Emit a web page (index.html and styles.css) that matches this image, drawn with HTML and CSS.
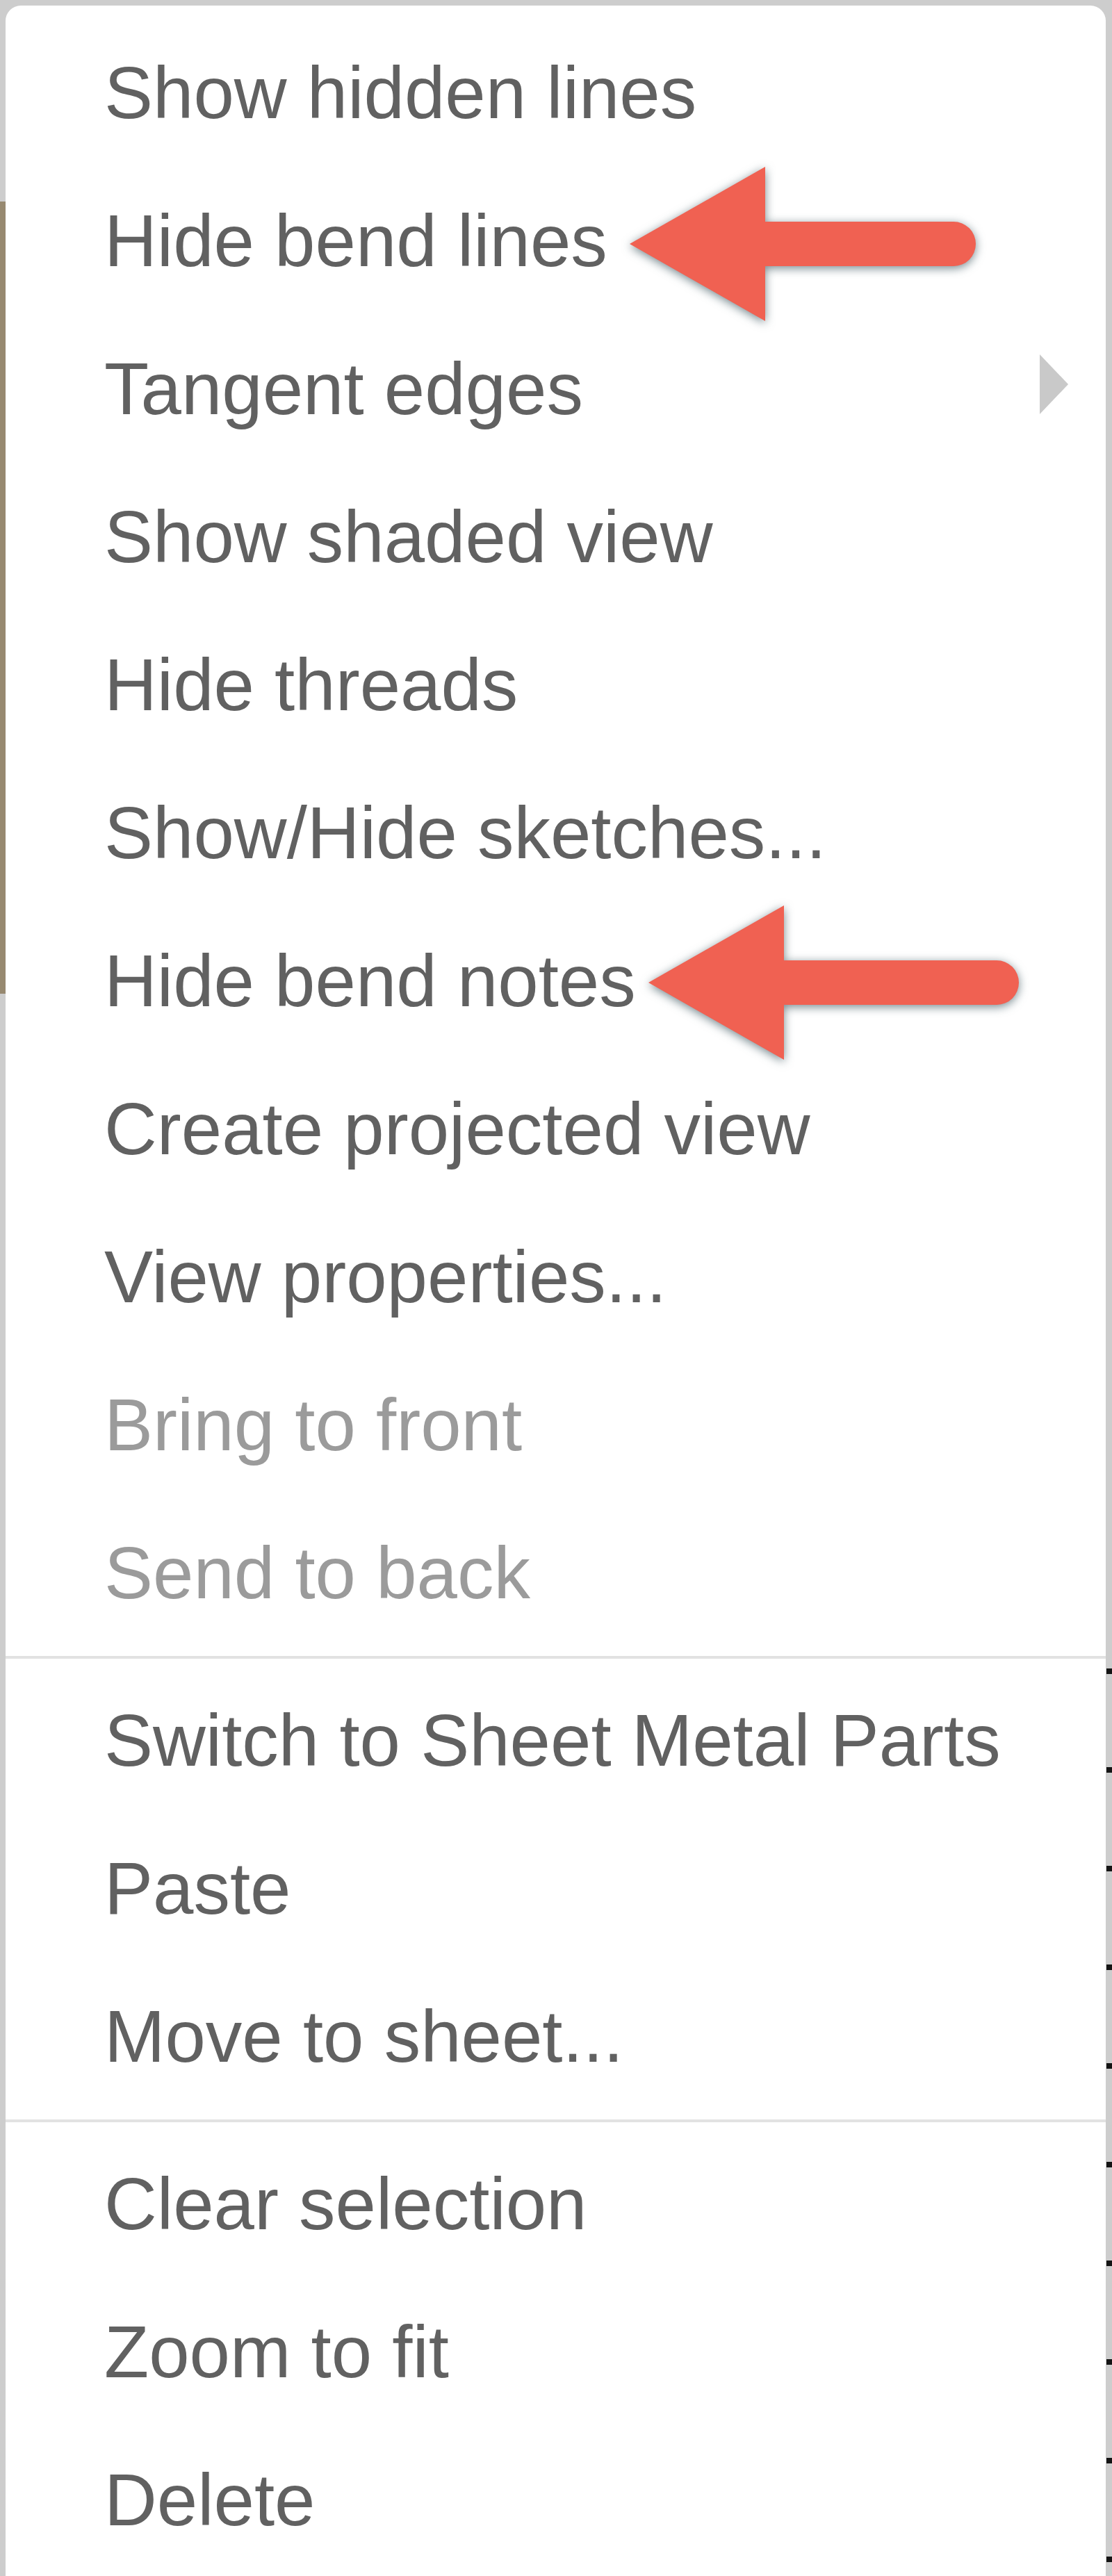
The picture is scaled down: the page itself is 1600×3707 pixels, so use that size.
FILE: index.html
```html
<!DOCTYPE html>
<html lang="en">
<head>
	<meta charset="UTF-8">
	<title>Drawing view context menu</title>
	<link rel="stylesheet" href="styles.css">
</head>
<body>
	<div id="menu">
		<ul>
			<li>Show hidden lines</li>
			<li>Hide bend lines
				<svg class="callout" width="560" height="282" viewBox="0 0 560 282">
					<path d="M20 131 L215 20 L215 99 L486 99 A32 32 0 0 1 486 163 L215 163 L215 242 Z"/>
				</svg>
			</li>
			<li class="sub">Tangent edges</li>
			<li>Show shaded view</li>
			<li>Hide threads</li>
			<li>Show/Hide sketches...</li>
			<li class="notes">Hide bend notes
				<svg class="callout" width="590" height="282" viewBox="0 0 590 282">
					<path d="M20 131 L215 20 L215 99 L521 99 A32 32 0 0 1 521 163 L215 163 L215 242 Z"/>
				</svg>
			</li>
			<li>Create projected view</li>
			<li>View properties...</li>
			<li class="off">Bring to front</li>
			<li class="off">Send to back</li>
			<li class="sep"></li>
			<li>Switch to Sheet Metal Parts</li>
			<li>Paste</li>
			<li>Move to sheet...</li>
			<li class="sep"></li>
			<li>Clear selection</li>
			<li>Zoom to fit</li>
			<li>Delete</li>
		</ul>
	</div>
</body>
</html>
```

FILE: styles.css
```css
* {
	margin: 0;
	padding: 0;
}
body {
	background-color: #cdcdcd;
	background-image: linear-gradient(#978970, #978970), repeating-linear-gradient(to bottom, transparent 0 21px, #141414 21px 29px, transparent 29px 142px);
	background-position: 0 290px, right 2380px;
	background-size: 8px 1140px, 8px 1327px;
	background-repeat: no-repeat;
	height: 3707px;
	overflow: hidden;
}
#menu {
	margin: 8px 9px 0 8px;
	height: 3720px;
	background: #fff;
	border-radius: 22px;
	font-family: "Liberation Sans", Arial, sans-serif;
}
#menu ul {
	list-style: none;
	padding-top: 19px;
}
#menu li {
	position: relative;
	height: 213px;
	line-height: 213px;
	padding-left: 142px;
	font-size: 105px;
	color: #616161;
	white-space: nowrap;
}
#menu li.off {
	color: #9b9b9b;
}
#menu li.sep {
	height: 4px;
	margin: 13px 0 11px;
	background: #e2e2e2;
}
#menu li.sub::after {
	content: "";
	position: absolute;
	right: 54px;
	top: 57px;
	border-left: 41px solid #c9c9c9;
	border-top: 43px solid transparent;
	border-bottom: 43px solid transparent;
}
#menu .callout {
	position: absolute;
	left: 878px;
	top: -20px;
	fill: #f06152;
	filter: drop-shadow(0 3px 7px rgba(25, 55, 65, 0.6));
}
#menu .notes .callout {
	left: 905px;
	top: -22px;
}
```
